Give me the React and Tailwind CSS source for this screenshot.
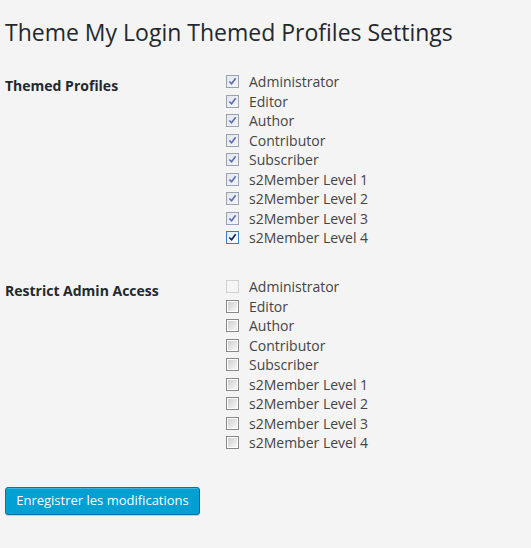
import React from 'react';

const roles = [
  "Administrator",
  "Editor",
  "Author",
  "Contributor",
  "Subscriber",
  "s2Member Level 1",
  "s2Member Level 2",
  "s2Member Level 3",
  "s2Member Level 4",
];

const Check = ({ color }) => (
  <svg viewBox="0 0 10 10" className="w-[9px] h-[9px]">
    <path d="M1.5 5 L4 7.5 L8.5 1.5" fill="none" stroke={color} strokeWidth="1.8" />
  </svg>
);

// old-style checkbox, mode: "checkedDisabled" | "checked" | "empty" | "emptyDisabled"
const Box = ({ mode }) => {
  if (mode === "checkedDisabled") {
    return (
      <span className="w-[13px] h-[13px] border border-[#9aa3b5] bg-gradient-to-br from-[#e4e6ee] to-[#f6f6f9] flex items-center justify-center">
        <Check color="#5b6db0" />
      </span>
    );
  }
  if (mode === "checked") {
    return (
      <span className="w-[13px] h-[13px] border border-[#3d7bc0] bg-gradient-to-br from-[#dceaf8] to-[#ffffff] flex items-center justify-center">
        <Check color="#0c1d5e" />
      </span>
    );
  }
  if (mode === "emptyDisabled") {
    return <span className="w-[13px] h-[13px] border border-[#d0d0d0] bg-[#f5f5f5]" />;
  }
  return (
    <span className="w-[13px] h-[13px] border border-[#888] p-[1px] bg-white">
      <span className="block w-full h-full bg-gradient-to-br from-[#cfcfcf] to-[#f7f7f7]" />
    </span>
  );
};

const Section = ({ title, modeFor }) => (
  <div className="flex">
    <div className="w-[226px] shrink-0 pl-[5px] font-bold text-[14px] leading-[19.5px] pt-[4px] text-[#23282d]">
      {title}
    </div>
    <ul className="flex flex-col">
      {roles.map((r, i) => (
        <li key={r} className="flex items-center h-[19.5px]">
          <Box mode={modeFor(i)} />
          <span className="ml-[10px] text-[14px] text-[#444]">{r}</span>
        </li>
      ))}
    </ul>
  </div>
);

export default function App() {
  return (
    <div className="min-h-screen bg-[#f4f4f4] text-[#444]" style={{ fontFamily: '"Open Sans", sans-serif' }}>
      <h1 className="pl-[5px] pt-[17px] text-[23px] leading-[30px] font-normal text-[#23282d]">
        Theme My Login Themed Profiles Settings
      </h1>
      <div className="mt-[25px]">
        <Section
          title="Themed Profiles"
          modeFor={(i) => (i === roles.length - 1 ? "checked" : "checkedDisabled")}
        />
      </div>
      <div className="mt-[29.5px]">
        <Section
          title="Restrict Admin Access"
          modeFor={(i) => (i === 0 ? "emptyDisabled" : "empty")}
        />
      </div>
      <div className="pl-[5px] mt-[34px]">
        <button
          type="button"
          className="h-[28px] px-[10px] w-[195px] rounded-[3px] bg-[#00a0d2] border border-[#0073aa] text-white text-[13px] shadow-[inset_0_1px_0_rgba(120,200,230,0.5),0_1px_0_rgba(0,0,0,0.15)]"
        >
          Enregistrer les modifications
        </button>
      </div>
    </div>
  );
}
